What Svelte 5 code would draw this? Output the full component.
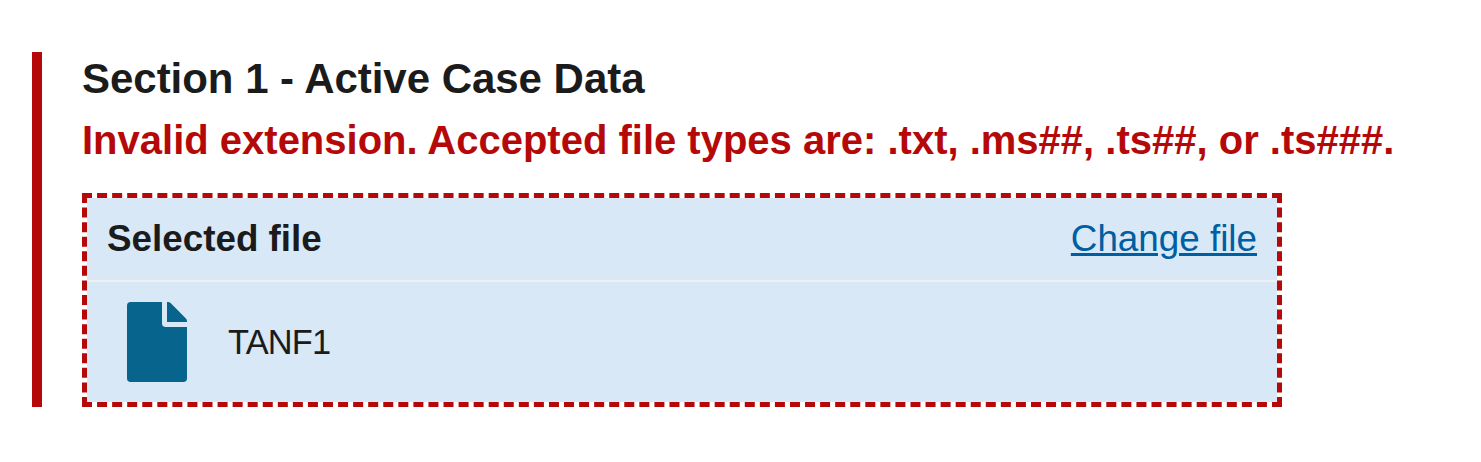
<script>
  const filename = 'TANF1';
</script>

<main>
  <section class="group">
    <h2>Section 1 - Active Case Data</h2>
    <p class="error">Invalid extension. Accepted file types are: .txt, .ms##, .ts##, or .ts###.</p>
    <div class="target">
      <header>
        <strong>Selected file</strong>
        <a href="#change">Change file</a>
      </header>
      <div class="file">
        <svg width="60" height="80" viewBox="0 0 60 80" aria-hidden="true">
          <path fill="#07648d" d="M35 0H3.75Q0 0 0 3.75V76.25Q0 80 3.75 80H56.25Q60 80 60 76.25V25H38.75Q35 25 35 21.25ZM40 0V20H60V19Q60 17.5 58.9 16.4L43.6 1.1Q42.5 0 41 0Z" />
        </svg>
        <span>{filename}</span>
      </div>
    </div>
  </section>
</main>

<style>
  :global(body) { background: #fff; }
  main { padding: 52px 0 0 32px; font-family: "Liberation Sans", Arial, sans-serif; color: #1b1b1b; }
  .group { box-sizing: border-box; height: 355px; border-left: 10px solid #b50909; padding-left: 40px; }
  h2 { margin: 0; font-size: 42px; line-height: 54px; letter-spacing: -0.03px; white-space: nowrap; }
  .error { margin: 7px 0 26px; font-size: 40px; line-height: 54px; font-weight: 700; color: #b50909; white-space: nowrap; }
  .target { box-sizing: border-box; width: 1200px; height: 214px; border: 5px dashed #b50909; background: #d9e8f6; background-clip: padding-box; }
  header { display: flex; justify-content: space-between; align-items: center; box-sizing: border-box; height: 84px; padding: 0 20px; border-bottom: 2px solid #f0f0f0; font-size: 36.8px; }
  a { color: #005ea2; text-decoration-thickness: 3px; }
  .file { display: flex; align-items: center; gap: 41px; height: 120px; padding-left: 40px; font-size: 34.4px; }
  .file span { letter-spacing: -0.8px; }
</style>
